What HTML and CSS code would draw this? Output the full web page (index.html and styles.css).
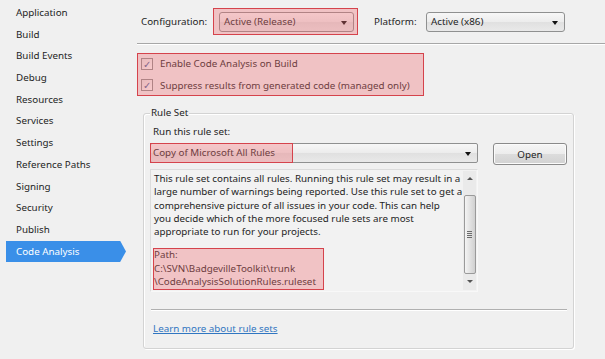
FILE: index.html
```html
<!DOCTYPE html>
<html lang="en">
  <head>
    <meta charset="UTF-8" />
    <title>Code Analysis</title>
    <link rel="stylesheet" href="styles.css">
  </head>
  <body>
    <div class="page">
      <nav class="nav">
        <div class="nav-item">Application</div>
        <div class="nav-item">Build</div>
        <div class="nav-item">Build Events</div>
        <div class="nav-item">Debug</div>
        <div class="nav-item">Resources</div>
        <div class="nav-item">Services</div>
        <div class="nav-item">Settings</div>
        <div class="nav-item">Reference Paths</div>
        <div class="nav-item">Signing</div>
        <div class="nav-item">Security</div>
        <div class="nav-item">Publish</div>
        <div class="nav-item active">Code Analysis</div>
      </nav>

      <main class="main">
        <!-- configuration / platform -->
        <div class="config-row">
          <span class="lbl lbl-config">Configuration:</span>
          <div class="hl hl-config">
            <div class="combo combo-config">Active (Release)<span class="arrow"></span></div>
          </div>
          <span class="lbl lbl-platform">Platform:</span>
          <div class="combo combo-platform">Active (x86)<span class="arrow"></span></div>
        </div>

        <div class="sep"></div>

        <div class="hl checks">
          <div class="check"><span class="box">&#10003;</span>Enable Code Analysis on Build</div>
          <div class="check"><span class="box">&#10003;</span>Suppress results from generated code (managed only)</div>
        </div>

        <!-- rule set group -->
        <div class="group">
          <div class="group-title">Rule Set</div>
          <div class="run-lbl">Run this rule set:</div>
          <div class="rule-row">
            <div class="combo combo-rule">
              <span class="hl hl-rule">Copy of Microsoft All Rules</span>
              <span class="arrow"></span>
            </div>
            <button class="btn">Open</button>
          </div>
          <div class="desc">
            <div class="desc-text">
              <p>This rule set contains all rules. Running this rule set may result in a<br>large number of warnings being reported. Use this rule set to get a<br>comprehensive picture of all issues in your code. This can help<br>you decide which of the more focused rule sets are most<br>appropriate to run for your projects.</p>
              <p class="hl path">Path:<br>C:\SVN\BadgevilleToolkit\trunk<br>\CodeAnalysisSolutionRules.ruleset</p>
            </div>
            <div class="scrollbar">
              <span class="sb-up"></span>
              <span class="sb-thumb"><span class="grip"></span></span>
              <span class="sb-down"></span>
            </div>
          </div>
          <div class="sep sep-group"></div>
          <a class="link" href="#">Learn more about rule sets</a>
        </div>
      </main>
    </div>
  </body>
</html>
```

FILE: styles.css
```css
html,
body {
  margin: 0;
  padding: 0;
  width: 100%;
  height: 100%;
  background: #f0f0f0;
  overflow: hidden;
}
body {
  font-family: "Noto Sans", "Open Sans", sans-serif;
  font-size: 9.8px;
  color: #1e1e1e;
}
.page {
  display: flex;
  height: 359px;
}

/* ---------- left tabs ---------- */
.nav {
  width: 130px;
  flex: none;
  padding-top: 2px;
  box-sizing: border-box;
}
.nav-item {
  height: 21.7px;
  line-height: 21.7px;
  padding-left: 16px;
  white-space: nowrap;
}
.nav-item.active {
  margin-left: 6px;
  padding-left: 10px;
  width: 120px;
  box-sizing: border-box;
  background: #3a8fe8;
  color: #fff;
  clip-path: polygon(0 0, calc(100% - 6px) 0, 100% 50%, calc(100% - 6px) 100%, 0 100%);
}

/* ---------- main ---------- */
.main {
  flex: 1;
  padding: 8px 0 0 7px;
  box-sizing: border-box;
}
.config-row {
  display: flex;
  align-items: center;
  height: 27px;
}
.lbl {
  white-space: nowrap;
}
.lbl-config {
  width: 72px;
  padding-left: 4px;
}
.lbl-platform {
  width: 52px;
  margin-left: 16px;
}

/* red callouts drawn over the controls */
.hl {
  position: relative;
}
.hl::after {
  content: "";
  position: absolute;
  inset: 0;
  border: 1.5px solid #d5434c;
  background: rgba(240, 110, 115, 0.35);
  pointer-events: none;
}
.hl-config {
  width: 145px;
  height: 27px;
  box-sizing: border-box;
  padding: 4px 4px 3px 6px;
}

.combo {
  position: relative;
  height: 20px;
  line-height: 18px;
  box-sizing: border-box;
  border: 1px solid #8f9090;
  border-radius: 3px;
  background: linear-gradient(#f7f7f7, #ececec 50%, #e0e0e0 51%, #e9e9e9);
  padding-left: 4px;
  white-space: nowrap;
}
.combo-platform {
  width: 139px;
}
.arrow {
  position: absolute;
  right: 6px;
  top: 8px;
  border-left: 3.5px solid transparent;
  border-right: 3.5px solid transparent;
  border-top: 4px solid #111;
}

.sep {
  margin-top: 8px;
  height: 0;
  border-top: 1px solid #a7a7a7;
  border-bottom: 1px solid #fff;
}

.checks {
  width: 287px;
  height: 43px;
  margin-top: 8px;
  box-sizing: border-box;
}
.check {
  display: flex;
  align-items: center;
  height: 21.5px;
  padding-left: 4px;
  white-space: nowrap;
}
.box {
  width: 12px;
  height: 12px;
  box-sizing: border-box;
  border: 1px solid #8e8f8f;
  background: linear-gradient(135deg, #e4e4e4, #fbfbfb);
  margin-right: 7px;
  font-size: 10px;
  line-height: 10px;
  text-align: center;
  color: #4a5f97;
}

/* ---------- rule set group ---------- */
.group {
  margin: 17px 0 0 6px;
  width: 431px;
  height: 236px;
  box-sizing: border-box;
  padding: 0 5px 0 6px;
  border: 1px solid #d3d3d3;
  border-radius: 3px;
  box-shadow: inset 1px 1px 0 #fff, 1px 1px 0 #fff;
}
.group-title {
  display: table;
  margin-top: -9px;
  padding: 0 1px;
  line-height: 16px;
  background: #f0f0f0;
}
.run-lbl {
  line-height: 16px;
  padding-left: 3px;
  margin-top: 3px;
}
.rule-row {
  display: flex;
  align-items: flex-start;
  margin-top: 3px;
}
.combo-rule {
  width: 328px;
  padding-left: 0;
  border-radius: 2px;
}
.hl-rule {
  display: block;
  width: 143px;
  height: 20px;
  margin: -1px 0 0 -1px;
  padding-left: 3px;
  line-height: 20px;
  box-sizing: border-box;
}
.btn {
  margin-left: 15px;
  width: 74px;
  height: 22px;
  font: inherit;
  color: #1e1e1e;
  border: 1px solid #8a8a8a;
  border-radius: 3px;
  background: linear-gradient(#f6f6f6, #ececec 50%, #dcdcdc 51%, #d2d2d2);
  box-shadow: inset 0 0 0 1px #fbfbfb;
}

.desc {
  display: flex;
  width: 328px;
  height: 123px;
  margin-top: 4px;
  box-sizing: border-box;
  border: 1px solid #dcdcdc;
  border-right-color: #f8f8f8;
  border-bottom-color: #f8f8f8;
  background: #f2f2f2;
}
.desc-text {
  flex: 1;
  padding: 2px 0 0 3px;
  white-space: nowrap;
  line-height: 13.3px;
  overflow: hidden;
}
.desc-text p {
  margin: 0;
}
.desc-text .path {
  display: inline-block;
  margin: 10px 0 0 -1px;
  padding: 0 8px 1px 1px;
  line-height: 13.5px;
}

.scrollbar {
  width: 13px;
  flex: none;
  display: flex;
  flex-direction: column;
  align-items: center;
  background: #eaeaea;
  margin: 1px 1px 1px 0;
}
.sb-up,
.sb-down {
  width: 0;
  height: 0;
  border-left: 3px solid transparent;
  border-right: 3px solid transparent;
  margin-top: 6px;
}
.sb-up {
  border-bottom: 3px solid #555;
}
.sb-down {
  border-top: 3px solid #555;
  margin-top: 6px;
}
.sb-thumb {
  width: 12px;
  height: 79px;
  margin-top: 15px;
  box-sizing: border-box;
  border: 1px solid #9a9a9a;
  border-radius: 2px;
  background: linear-gradient(90deg, #f4f4f4, #e2e2e2 50%, #d0d0d0);
  display: flex;
  align-items: center;
  justify-content: center;
}
.grip {
  width: 5px;
  height: 7px;
  background: repeating-linear-gradient(#6b6b6b 0 1px, transparent 1px 2px);
}

.sep-group {
  width: 416px;
  margin-top: 17px;
  margin-left: 1px;
  border-top-color: #b0b0b0;
}
.link {
  display: inline-block;
  margin: 11px 0 0 3px;
  line-height: 14px;
  color: #3076c1;
  text-decoration: underline;
}
```
